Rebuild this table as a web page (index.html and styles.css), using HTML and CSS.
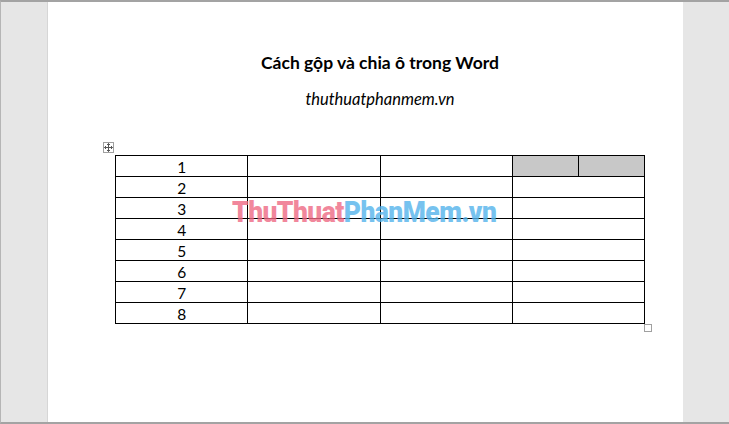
FILE: index.html
```html
<!DOCTYPE html>
<html>
<head>
<meta charset="utf-8">
<link rel="stylesheet" href="styles.css">
</head>
<body>
<div class="frame">
  <div class="page">
    <h1 class="title">Cách gộp và chia ô trong Word</h1>
    <p class="subtitle">thuthuatphanmem.vn</p>
    <div class="table-wrap">
      <span class="move-handle">
        <svg width="9" height="9" viewBox="0 0 9 9"><path d="M4.5 0.5V8.5M0.5 4.5H8.5M3 2L4.5 0.5L6 2M3 7L4.5 8.5L6 7M2 3L0.5 4.5L2 6M7 3L8.5 4.5L7 6" fill="none" stroke="#555" stroke-width="1"/></svg>
      </span>
      <table class="grid">
        <tr><td class="num">1</td><td></td><td></td><td class="split"><div class="split-row"><span class="half"></span><span class="half"></span></div></td></tr>
        <tr><td class="num">2</td><td></td><td></td><td></td></tr>
        <tr><td class="num">3</td><td></td><td></td><td></td></tr>
        <tr><td class="num">4</td><td></td><td></td><td></td></tr>
        <tr><td class="num">5</td><td></td><td></td><td></td></tr>
        <tr><td class="num">6</td><td></td><td></td><td></td></tr>
        <tr><td class="num">7</td><td></td><td></td><td></td></tr>
        <tr><td class="num">8</td><td></td><td></td><td></td></tr>
      </table>
      <span class="resize-handle"></span>
      <div class="watermark"><span class="wm-red">ThuThuat</span><span class="wm-blue">PhanMem.vn</span></div>
    </div>
  </div>
</div>
</body>
</html>
```
FILE: styles.css
```css
* { box-sizing: border-box; }
html, body { margin: 0; padding: 0; }
body { width: 729px; height: 424px; overflow: hidden; }
.frame {
  width: 729px;
  height: 424px;
  background: #e6e6e6;
  border-top: 2px solid #a3a3a3;
  border-left: 1px solid #b5b5b5;
  border-bottom: 2px solid #a3a3a3;
  display: flex;
}
.page {
  margin-left: 46px;
  width: 636px;
  height: 100%;
  background: #fff;
  border-left: 1px solid #d6d6d6;
  padding: 50px 38px 0 67px;
  font-family: Lato, "Open Sans", sans-serif;
  color: #000;
}
.title {
  margin: 0;
  font-size: 17.5px;
  font-weight: 700;
  text-align: center;
  line-height: 22px;
}
.subtitle {
  margin: 14px 0 0;
  font-size: 16.5px;
  font-style: italic;
  text-align: center;
  line-height: 22px;
}
.table-wrap {
  position: relative;
  margin-top: 45px;
  width: 530px;
}
.grid {
  border-collapse: collapse;
  width: 530px;
  table-layout: fixed;
}
.grid td {
  border: 1px solid #000;
  height: 20.9px;
  padding: 0;
  font-size: 15.5px;
  line-height: 18px;
}
.grid td.num { text-align: center; padding-top: 2px; }
.grid td.split { padding: 0; }
.split-row { display: flex; height: 20px; }
.half { flex: 1; background: #c8c8c8; }
.half + .half { border-left: 1px solid #000; }
.move-handle {
  position: absolute;
  left: -12px;
  top: -13px;
  width: 11px;
  height: 11px;
  border: 1px solid #a0a0a0;
  background: #fff;
  display: flex;
  align-items: center;
  justify-content: center;
}
.resize-handle {
  position: absolute;
  right: -7px;
  bottom: -8px;
  width: 8px;
  height: 8px;
  border: 1px solid #a0a0a0;
  background: #fff;
}
.watermark {
  position: absolute;
  left: 117px;
  top: 40px;
  font-family: Roboto, sans-serif;
  font-weight: 900;
  font-size: 30px;
  line-height: 34px;
  letter-spacing: -0.6px;
  transform: scaleX(0.88);
  transform-origin: left center;
  white-space: nowrap;
  pointer-events: none;
  opacity: 0.8;
}
.wm-red { color: #ee6a84; }
.wm-blue { color: #55b4ec; }
```
